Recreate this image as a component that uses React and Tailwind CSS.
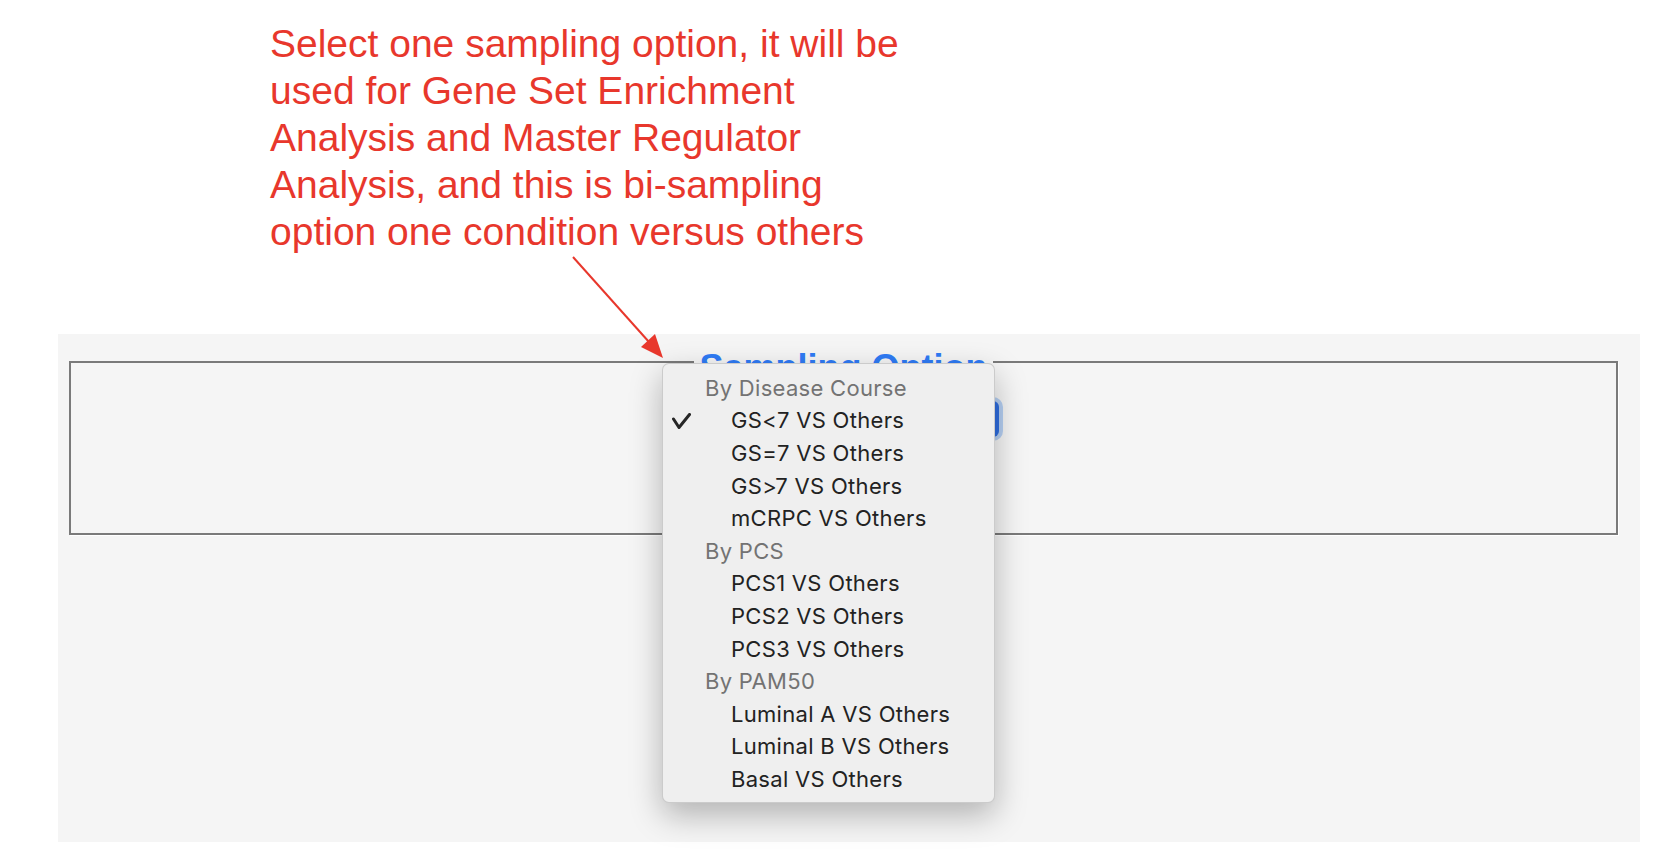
const sections = [
  {
    title: "By Disease Course",
    items: ["GS<7 VS Others", "GS=7 VS Others", "GS>7 VS Others", "mCRPC VS Others"],
  },
  {
    title: "By PCS",
    items: ["PCS1 VS Others", "PCS2 VS Others", "PCS3 VS Others"],
  },
  {
    title: "By PAM50",
    items: ["Luminal A VS Others", "Luminal B VS Others", "Basal VS Others"],
  },
];

const selected = "GS<7 VS Others";

function Check() {
  return (
    <svg width="19" height="16" viewBox="0 0 19 16" fill="none">
      <path d="M1.5 6 L7 14.5 L17.5 1.5" stroke="#262626" strokeWidth="3" strokeLinecap="round" strokeLinejoin="round" />
    </svg>
  );
}

function Arrow() {
  return (
    <svg className="absolute left-0 top-0 pointer-events-none" width="1672" height="860" viewBox="0 0 1672 860">
      <line x1="573" y1="257" x2="649" y2="342" stroke="#e8372c" strokeWidth="2" />
      <polygon points="663,358 641,347 655,334" fill="#e8372c" />
    </svg>
  );
}

function SamplingMenu() {
  return (
    <div className="absolute left-[604px] top-[29px] w-[333px] h-[440px] py-[8px] rounded-[7px] bg-[#efefef] border border-black/15 shadow-[0_12px_32px_rgba(0,0,0,0.28)] font-['Inter',sans-serif] text-[22px] tracking-[0.3px]">
      {sections.map((s) => (
        <div key={s.title}>
          <div className="flex items-center h-[32.6px] pl-[42px] text-[#737373]">{s.title}</div>
          {s.items.map((item) => (
            <div key={item} className="flex items-center h-[32.6px] text-[#222222]">
              <div className="w-[68px] pl-[9px] flex items-center">
                {item === selected && <Check />}
              </div>
              <span>{item}</span>
            </div>
          ))}
        </div>
      ))}
    </div>
  );
}

export default function App() {
  return (
    <div className="relative w-full h-[860px] bg-white overflow-hidden font-['Liberation_Sans',Arial,sans-serif]">
      {/* Annotation */}
      <div className="pl-[270px] pt-[20px] text-[39px] leading-[47px] text-[#e8372c]">
        <p>Select one sampling option, it will be</p>
        <p>used for Gene Set Enrichment</p>
        <p>Analysis and Master Regulator</p>
        <p>Analysis, and this is bi-sampling</p>
        <p>option one condition versus others</p>
      </div>

      {/* Panel */}
      <div className="relative mt-[79px] ml-[58px] w-[1582px] h-[508px] bg-[#f5f5f5] pt-[2px] pl-[11px]">
        <fieldset className="w-[1549px] border-2 border-[#7a7a7a] shadow-[1px_1px_0_#ffffff] pt-[13px] pb-[96px]">
          <legend className="mx-auto px-[6px] pt-[12px] text-[36px] leading-[40px] font-bold text-[#2f7bf5]">
            Sampling Option
          </legend>
          <div className="ml-[618px] w-[310px] h-[36px] rounded-[6px] bg-[#2f6ee0] shadow-[0_0_0_4px_#b5cff2] flex items-center pl-[14px] text-white text-[20px]">
            GS&lt;7 VS Others
          </div>
        </fieldset>
        <SamplingMenu />
      </div>

      <Arrow />
    </div>
  );
}
